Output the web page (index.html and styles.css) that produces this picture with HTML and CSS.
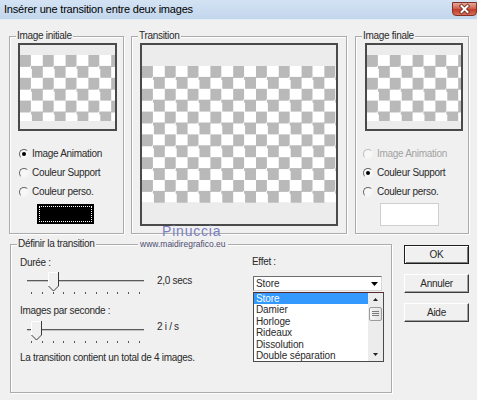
FILE: index.html
```html
<!DOCTYPE html>
<html lang="fr">
<head>
<meta charset="utf-8">
<title>Insérer une transition entre deux images</title>
<link rel="stylesheet" href="styles.css">
</head>
<body>
<div class="window">
  <div class="titlebar">
    <span class="title">Insérer une transition entre deux images</span>
    <div class="close">
      <svg width="23" height="12" viewBox="0 0 23 12">
        <path d="M8.5 3 L14.5 9 M14.5 3 L8.5 9" stroke="#6b2219" stroke-width="3.6" stroke-linecap="square"/>
        <path d="M8.5 3 L14.5 9 M14.5 3 L8.5 9" stroke="#ffffff" stroke-width="2" stroke-linecap="square"/>
      </svg>
    </div>
  </div>

  <div class="client">
    <div class="toprow">
      <div class="group g-init">
        <span class="legend">Image initiale</span>
        <div class="preview small">
          <div class="strip top-s"></div>
          <div class="checker check-s"></div>
          <div class="strip rest"></div>
        </div>
        <div class="options">
          <div class="radio-row"><span class="radio checked"></span><span>Image Animation</span></div>
          <div class="radio-row"><span class="radio"></span><span>Couleur Support</span></div>
          <div class="radio-row"><span class="radio"></span><span>Couleur perso.</span></div>
        </div>
        <div class="swatch black"><div class="focus"></div></div>
      </div>

      <div class="group g-trans">
        <span class="legend">Transition</span>
        <div class="preview large">
          <div class="strip top-l"></div>
          <div class="checker check-l"></div>
          <div class="strip rest"></div>
        </div>
      </div>

      <div class="group g-final">
        <span class="legend">Image finale</span>
        <div class="preview small">
          <div class="strip top-s"></div>
          <div class="checker check-s"></div>
          <div class="strip rest"></div>
        </div>
        <div class="options">
          <div class="radio-row disabled"><span class="radio"></span><span>Image Animation</span></div>
          <div class="radio-row"><span class="radio checked"></span><span>Couleur Support</span></div>
          <div class="radio-row"><span class="radio"></span><span>Couleur perso.</span></div>
        </div>
        <div class="swatch white"></div>
      </div>
    </div>

    <div class="bottomrow">
      <div class="group g-def">
        <span class="legend">Définir la transition</span>
        <div class="def-left">
          <div class="label">Durée :</div>
          <div class="slider-row first">
            <div class="slider">
              <div class="track"></div>
              <div class="ticks"></div>
              <svg class="thumb" style="left:21px" width="11" height="20" viewBox="0 0 11 20">
                <path d="M0.5 14 V0.5 H10.5 V14 L5.5 19 Z" fill="#f0f0f0"/>
                <path d="M0.5 14 V0.5 H10" stroke="#ffffff" fill="none"/>
                <path d="M10.5 0 V14 L5.5 19 L0.5 14" stroke="#3a3a3a" fill="none"/>
              </svg>
            </div>
            <span class="value">2,0 secs</span>
          </div>
          <div class="label second">Images par seconde :</div>
          <div class="slider-row">
            <div class="slider">
              <div class="track"></div>
              <div class="ticks"></div>
              <svg class="thumb" style="left:4px" width="11" height="20" viewBox="0 0 11 20">
                <path d="M0.5 14 V0.5 H10.5 V14 L5.5 19 Z" fill="#f0f0f0"/>
                <path d="M0.5 14 V0.5 H10" stroke="#ffffff" fill="none"/>
                <path d="M10.5 0 V14 L5.5 19 L0.5 14" stroke="#3a3a3a" fill="none"/>
              </svg>
            </div>
            <span class="value up">2 i / s</span>
          </div>
          <div class="label summary">La transition contient un total de 4 images.</div>
        </div>
        <div class="def-right">
          <div class="label">Effet :</div>
          <div class="combo">
            <span>Store</span>
            <span class="combo-arrow">
              <svg width="7" height="4" viewBox="0 0 7 4"><path d="M0 0 H7 L3.5 4 Z" fill="#000"/></svg>
            </span>
          </div>
          <div class="list">
            <div class="items">
              <div class="item sel">Store</div>
              <div class="item">Damier</div>
              <div class="item">Horloge</div>
              <div class="item">Rideaux</div>
              <div class="item">Dissolution</div>
              <div class="item">Double séparation</div>
            </div>
            <div class="scrollbar">
              <div class="sb-btn"><svg width="5" height="3" viewBox="0 0 5 3"><path d="M0 3 H5 L2.5 0 Z" fill="#222"/></svg></div>
              <div class="sb-thumb">
                <svg width="7" height="6" viewBox="0 0 7 6"><path d="M0 0.5 H7 M0 2.5 H7 M0 4.5 H7" stroke="#7a7a7a"/></svg>
              </div>
              <div class="sb-track"></div>
              <div class="sb-btn"><svg width="5" height="3" viewBox="0 0 5 3"><path d="M0 0 H5 L2.5 3 Z" fill="#222"/></svg></div>
            </div>
          </div>
        </div>
      </div>

      <div class="buttons">
        <div class="btn default">OK</div>
        <div class="btn">Annuler</div>
        <div class="btn">Aide</div>
      </div>
    </div>
  </div>

  <div class="wm-name">Pinuccia</div>
  <div class="wm-url">www.maidiregrafico.eu</div>
</div>
</body>
</html>
```

FILE: styles.css
```css
* { box-sizing: border-box; }
html, body { margin: 0; padding: 0; }
body {
  width: 477px;
  height: 400px;
  overflow: hidden;
  background: #f0f0f0;
  font-family: "Liberation Sans", Arial, sans-serif;
  font-size: 10px;
  letter-spacing: -0.3px;
  color: #2a2a2a;
}
.window { position: relative; width: 477px; height: 400px; background: #f0f0f0; }

/* title bar */
.titlebar {
  height: 20px;
  display: flex;
  align-items: flex-start;
  background: linear-gradient(#d4e3f4, #c2d6ec);
  border-bottom: 1px solid #e4edf7;
}
.title {
  font-size: 11px;
  letter-spacing: -0.2px;
  line-height: 19px;
  padding-left: 4px;
  color: #000;
}
.close {
  margin-left: auto;
  margin-top: 2px;
  width: 25px;
  height: 14px;
  border: 1px solid #833026;
  border-radius: 0 0 4px 4px;
  background: linear-gradient(#e5a79b, #d06352 45%, #c13c2a 55%, #d5705a);
  display: flex;
}

/* client area */
.client { padding-top: 16px; }
.toprow { display: flex; padding-left: 9px; height: 198px; }
.group {
  position: relative;
  border: 1px solid #ababab;
  box-shadow: inset 1px 1px 0 #ffffff, 1px 1px 0 #ffffff;
}
.legend {
  position: absolute;
  top: -7px;
  left: 6px;
  padding: 0 1px;
  line-height: 12px;
  background: #f0f0f0;
  white-space: nowrap;
}
.g-init { width: 115px; padding: 6px 0 0 8px; }
.g-trans { width: 216px; margin-left: 7px; padding: 6px 0 0 8px; }
.g-final { width: 114px; margin-left: 8px; padding: 6px 0 0 7px; }

/* previews */
.preview {
  border: 2px solid #4a4a4a;
  display: flex;
  flex-direction: column;
  background: #ececec;
}
.preview.small { width: 99px; height: 88px; }
.g-final .preview.small { width: 98px; margin-left: 2px; }
.preview.large { width: 198px; height: 183px; }
.strip { background: #ececec; }
.top-s { height: 10px; }
.top-l { height: 21px; }
.rest { flex: 1; }
.checker {
  background-color: #fff;
  background-image: conic-gradient(#ffffff 25%, #b9b9b9 0 50%, #ffffff 0 75%, #b9b9b9 0);
  background-size: 22.8px 22.8px;
}
.check-s { height: 66px; }
.check-l { height: 137px; }

/* radios */
.options { margin-top: 13px; }
.radio-row {
  height: 19px;
  display: flex;
  align-items: center;
  gap: 3px;
  margin-left: 1px;
  white-space: nowrap;
}
.g-final .radio-row { margin-left: 0; gap: 4px; }
.radio {
  width: 10px;
  height: 10px;
  border-radius: 50%;
  border: 1px solid;
  border-color: #666 #f4f4f4 #f4f4f4 #666;
  background: #f7f7f7;
  display: flex;
  align-items: center;
  justify-content: center;
  flex: none;
}
.radio.checked::after {
  content: "";
  width: 4px;
  height: 4px;
  border-radius: 50%;
  background: #000;
}
.radio-row.disabled { color: #a3a3a3; }
.radio-row.disabled .radio { border-color: #bdbdbd #f4f4f4 #f4f4f4 #bdbdbd; }

/* swatches */
.swatch.black {
  margin-top: 3px;
  margin-left: 19px;
  width: 57px;
  height: 20px;
  background: #000;
  padding: 2px;
}
.swatch.black .focus { height: 100%; border: 1px dotted #ffffff; }
.swatch.white {
  margin-top: 2px;
  margin-left: 17px;
  width: 59px;
  height: 23px;
  background: #fff;
  border: 1px solid #cfcfcf;
}

/* bottom row */
.bottomrow { display: flex; margin-top: 10px; padding-left: 10px; }
.g-def { width: 382px; height: 149px; display: flex; }
.def-left { width: 232px; padding: 12px 0 0 9px; }
.label { line-height: 12px; height: 12px; white-space: nowrap; }
.label.second { margin-top: 10px; }
.label.summary { margin-top: 8px; }
.slider-row { display: flex; align-items: flex-start; margin-top: 3px; }
.slider-row.first { margin-top: 2px; }
.slider { position: relative; width: 120px; height: 24px; margin-left: 7px; }
.track {
  margin-top: 9px;
  width: 117px;
  height: 2px;
  border-top: 1px solid #5a5a5a;
  border-bottom: 1px solid #c4c4c4;
}
.ticks {
  margin-top: 10px;
  margin-left: 4px;
  width: 110px;
  height: 2px;
  background: repeating-linear-gradient(to right, #555 0 1px, transparent 1px 10.8px);
}
.thumb { position: absolute; top: 1px; }
.value { margin-left: 10px; margin-top: 4px; line-height: 12px; white-space: nowrap; }
.value.up { margin-top: 1px; }

.def-right { margin-left: 9px; padding-top: 11px; }
.combo {
  margin-top: 8px;
  margin-left: 1px;
  width: 129px;
  height: 15px;
  border: 1px solid;
  border-color: #6e6e6e #d8d8d8 #d8d8d8 #6e6e6e;
  background: #fff;
  display: flex;
  align-items: center;
  padding-left: 2px;
  letter-spacing: -0.1px;
}
.combo-arrow {
  margin-left: auto;
  width: 14px;
  height: 13px;
  display: flex;
  align-items: center;
  justify-content: center;
}
.list {
  margin-top: 1px;
  margin-left: 1px;
  width: 131px;
  height: 70px;
  border: 1px solid #4a4a4a;
  border-top-color: #5a2a2a;
  background: #fff;
  display: flex;
  letter-spacing: -0.1px;
}
.items { flex: 1; overflow: hidden; }
.item {
  height: 11.4px;
  line-height: 11.4px;
  padding-left: 2px;
  white-space: nowrap;
  color: #2a2a2a;
}
.item.sel { background: #3399ff; color: #fff; }
.scrollbar {
  width: 15px;
  display: flex;
  flex-direction: column;
  background: #ececec;
}
.sb-btn {
  height: 13px;
  display: flex;
  align-items: center;
  justify-content: center;
  flex: none;
}
.sb-thumb {
  margin: 1px 1px 0 1px;
  height: 14px;
  border: 1px solid #9c9c9c;
  border-radius: 2px;
  background: linear-gradient(to right, #f6f6f6, #e4e4e4);
  display: flex;
  align-items: center;
  justify-content: center;
  flex: none;
}
.sb-track { flex: 1; }

/* buttons */
.buttons {
  margin-left: 12px;
  margin-top: 1px;
  display: flex;
  flex-direction: column;
  gap: 10px;
}
.btn {
  width: 65px;
  height: 19px;
  display: flex;
  align-items: center;
  justify-content: center;
  background: #f0f0f0;
  border: 1px solid;
  border-color: #ffffff #3c3c3c #3c3c3c #ffffff;
  box-shadow: inset -1px -1px 0 #a0a0a0;
  color: #2a2a2a;
}
.btn.default {
  border-color: #1e1e1e;
  box-shadow: inset 1px 1px 0 #ffffff, inset -1px -1px 0 #7a7a7a;
}

/* watermark */
.wm-name {
  position: absolute;
  left: 162px;
  top: 224px;
  font-size: 14px;
  line-height: 14px;
  letter-spacing: 0.8px;
  color: #7b7fc0;
}
.wm-url {
  position: absolute;
  left: 138px;
  top: 239px;
  padding: 0 2px;
  font-size: 8.5px;
  line-height: 10px;
  letter-spacing: 0;
  color: #4e4e72;
  background: #f0f0f0;
}
```
